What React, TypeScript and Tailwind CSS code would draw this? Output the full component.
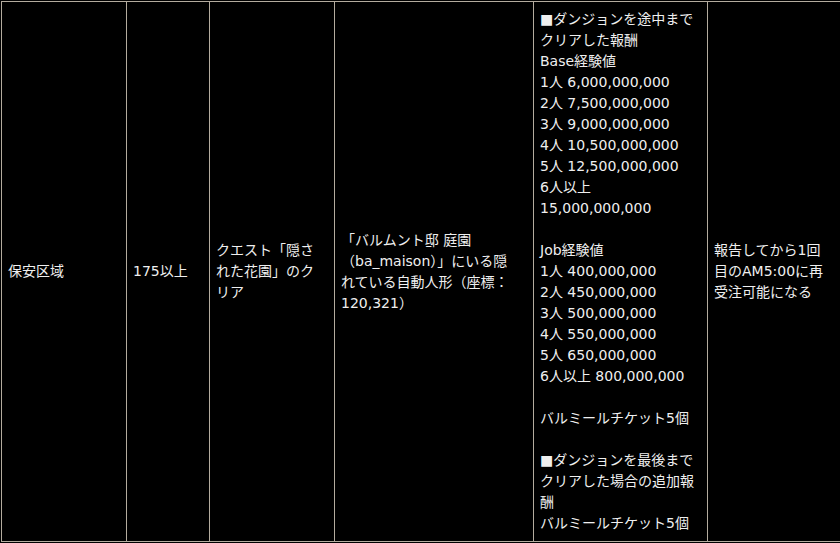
const rewardLines = [
  "■ダンジョンを途中まで",
  "クリアした報酬",
  "Base経験値",
  "1人 6,000,000,000",
  "2人 7,500,000,000",
  "3人 9,000,000,000",
  "4人 10,500,000,000",
  "5人 12,500,000,000",
  "6人以上",
  "15,000,000,000",
  "",
  "Job経験値",
  "1人 400,000,000",
  "2人 450,000,000",
  "3人 500,000,000",
  "4人 550,000,000",
  "5人 650,000,000",
  "6人以上 800,000,000",
  "",
  "バルミールチケット5個",
  "",
  "■ダンジョンを最後まで",
  "クリアした場合の追加報",
  "酬",
  "バルミールチケット5個",
];

const Lines = ({ lines }: { lines: string[] }) => (
  <>
    {lines.map((line, i) => (
      <div key={i} className="whitespace-nowrap h-[21px]">
        {line}
      </div>
    ))}
  </>
);

const cell = "border border-[#b3ab9e] align-middle pl-[6px] pr-[8px] py-[7px]";

export default function App() {
  return (
    <div
      className="w-[840px] h-[543px] bg-black overflow-hidden text-[#efefef] text-[14px] leading-[21px]"
      style={{ fontFamily: '"DejaVu Sans", "Noto Sans CJK JP", sans-serif' }}
    >
      <table className="border-collapse ml-px mt-px table-fixed w-[850px]">
        <colgroup>
          <col className="w-[125px]" />
          <col className="w-[83px]" />
          <col className="w-[125px]" />
          <col className="w-[199px]" />
          <col className="w-[174px]" />
          <col className="w-[144px]" />
        </colgroup>
        <tbody>
          <tr>
            <td className={cell}>保安区域</td>
            <td className={cell}>175以上</td>
            <td className={cell}>
              <Lines lines={["クエスト「隠さ", "れた花園」のク", "リア"]} />
            </td>
            <td className={cell}>
              <Lines
                lines={[
                  "「バルムント邸 庭園",
                  "（ba_maison）」にいる隠",
                  "れている自動人形（座標：",
                  "120,321）",
                ]}
              />
            </td>
            <td className={cell}>
              <Lines lines={rewardLines} />
            </td>
            <td className={cell}>
              <Lines lines={["報告してから1回", "目のAM5:00に再", "受注可能になる"]} />
            </td>
          </tr>
        </tbody>
      </table>
    </div>
  );
}
